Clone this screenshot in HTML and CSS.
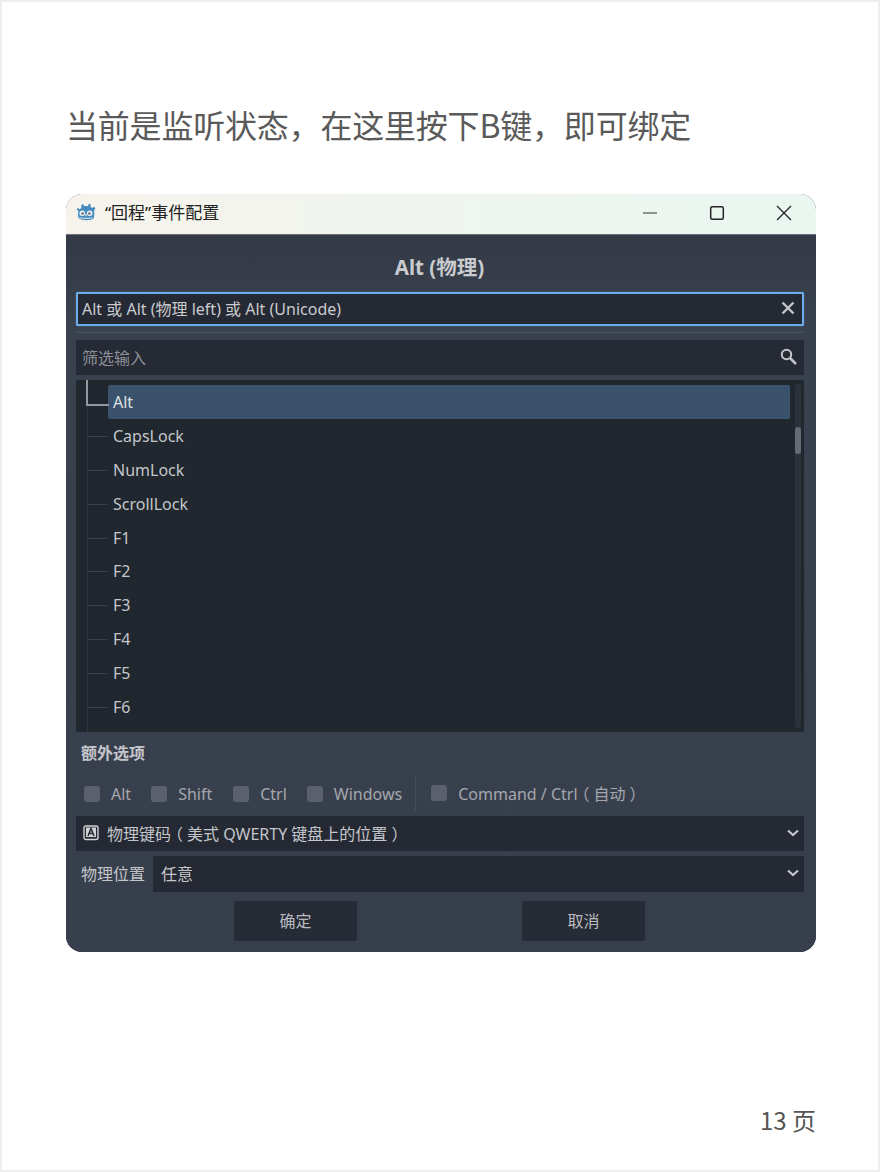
FILE: index.html
```html
<!DOCTYPE html>
<html lang="zh">
<head>
<meta charset="utf-8">
<title>事件配置</title>
<link rel="stylesheet" href="styles.css">
</head>
<body>
<div class="page">
  <h1 class="heading">当前是监听状态，在这里按下B键，即可绑定</h1>
  <div class="dialog">
    <div class="titlebar">
      <svg class="logo" viewBox="0 0 20 20" width="20" height="20">
        <path fill="#478cbf" d="M7.2 .8l.8 2.100h4l.8-2.100 2 .5-.3 2.400 1.800 1.300 1.700-1.300 1.400 1.500-1.200 2.300c.2 2.500.1 5-.2 7.500-2.600 3-12 3-15.600 0-.3-2.500-.4-5-.2-7.500L.500 6.500l1.400-1.500 1.700 1.300 1.800-1.300-.3-2.400z"/>
        <circle cx="6.300" cy="10.300" r="2.800" fill="#e8eef3"/><circle cx="13.700" cy="10.300" r="2.800" fill="#e8eef3"/>
        <circle cx="6.600" cy="10.500" r="1.300" fill="#6b7280"/><circle cx="13.400" cy="10.500" r="1.300" fill="#6b7280"/>
        <rect x="9.400" y="11" width="1.200" height="2" fill="#e8eef3"/>
        <path fill="none" stroke="#e8eef3" stroke-width="1" d="M3.500 14.500c.8.800 1.500.800 2.500.300 1 .9 2.500.9 4 .2 1.500.7 3 .7 4-.200 1 .5 1.700.5 2.500-.300"/>
      </svg>
      <span class="window-title">“回程”事件配置</span>
      <div class="winbtns">
        <svg width="16" height="16" viewBox="0 0 16 16"><path d="M1 8h14" stroke="#333" stroke-width="1.100"/></svg>
        <svg width="16" height="16" viewBox="0 0 16 16"><rect x="1.700" y="1.700" width="12.600" height="12.600" rx="1.500" fill="none" stroke="#222" stroke-width="1.500"/></svg>
        <svg width="16" height="16" viewBox="0 0 16 16"><path d="M1 1l14 14M15 1L1 15" stroke="#222" stroke-width="1.300"/></svg>
      </div>
    </div>
    <div class="body">
      <div class="event-name">Alt (物理)</div>
      <div class="field focused">
        <span class="grow">Alt 或 Alt (物理 left) 或 Alt (Unicode)</span>
        <svg width="14" height="14" viewBox="0 0 14 14"><path d="M1.500 1.500l11 11M12.500 1.500l-11 11" stroke="#c4c6ca" stroke-width="2.400"/></svg>
      </div>
      <div class="rule"></div>
      <div class="field filter">
        <span class="grow muted">筛选输入</span>
        <svg width="17" height="17" viewBox="0 0 17 17"><circle cx="6.500" cy="6.500" r="4.700" fill="none" stroke="#c4c6ca" stroke-width="2"/><path d="M10 10l6 6" stroke="#c4c6ca" stroke-width="2.500"/></svg>
      </div>
      <div class="tree">
        <div class="row selected"><span class="label">Alt</span></div>
        <div class="row"><span class="label">CapsLock</span></div>
        <div class="row"><span class="label">NumLock</span></div>
        <div class="row"><span class="label">ScrollLock</span></div>
        <div class="row"><span class="label">F1</span></div>
        <div class="row"><span class="label">F2</span></div>
        <div class="row"><span class="label">F3</span></div>
        <div class="row"><span class="label">F4</span></div>
        <div class="row"><span class="label">F5</span></div>
        <div class="row"><span class="label">F6</span></div>
        <div class="scrollbar"><div class="thumb"></div></div>
      </div>
      <div class="section">额外选项</div>
      <div class="checks">
        <label class="check c1"><i class="box"></i>Alt</label>
        <label class="check c2"><i class="box"></i>Shift</label>
        <label class="check c3"><i class="box"></i>Ctrl</label>
        <label class="check c4"><i class="box"></i>Windows</label>
        <div class="vsep"></div>
        <label class="check c5"><i class="box"></i><span>Command / Ctrl<span class="paren">（</span>自动<span class="paren">）</span></span></label>
      </div>
      <div class="select first">
        <svg class="keyicon" width="16" height="16" viewBox="0 0 16 16"><rect x="1" y="1" width="14" height="13.500" rx="2" fill="none" stroke="#d0d2d5" stroke-width="1.400"/><rect x="3" y="2.500" width="10" height="9.500" fill="#d0d2d5"/><path d="M5 11l3-7.500L11 11M6.200 8.500h3.600" fill="none" stroke="#252933" stroke-width="1.500"/></svg>
        <span class="grow">物理键码<span class="paren">（</span>美式 QWERTY 键盘上的位置<span class="paren">）</span></span>
        <svg class="chev" width="14" height="10" viewBox="0 0 14 10"><path d="M2 2.500l5 4.500 5-4.500" fill="none" stroke="#c4c6ca" stroke-width="2.200"/></svg>
      </div>
      <div class="location">
        <span class="loc-label">物理位置</span>
        <div class="select second">
          <span class="grow">任意</span>
          <svg class="chev" width="14" height="10" viewBox="0 0 14 10"><path d="M2 2.500l5 4.500 5-4.500" fill="none" stroke="#c4c6ca" stroke-width="2.200"/></svg>
        </div>
      </div>
      <div class="buttons">
        <div class="btn">确定</div>
        <div class="btn">取消</div>
      </div>
    </div>
  </div>
  <div class="pageno">13 页</div>
</div>
</body>
</html>
```
FILE: styles.css
```css
* { box-sizing: border-box; }
html, body { margin: 0; padding: 0; }
body { background: #fff; font-family: "Noto Sans", "Noto Sans CJK SC", sans-serif; }
.page {
  width: 880px; height: 1172px; border: 2px solid #eeeeee; background: #fff;
  padding: 0 64px; display: flex; flex-direction: column;
}
.heading {
  margin: 98px 0 0 0; height: 48px; line-height: 48px;
  font-size: 32px; font-weight: 400; letter-spacing: -0.2px; color: #5a5a5a;
  font-family: "Noto Sans CJK SC", sans-serif; white-space: nowrap;
}
.dialog { margin-top: 46px; width: 750px; height: 758px; border-radius: 16px; overflow: hidden; display: flex; flex-direction: column; background: #383f4c; }
.titlebar {
  height: 41px; flex: none; display: flex; align-items: center; padding: 0 0 2px 10px;
  background: linear-gradient(90deg, #f7f3ec 0%, #f0f4ee 40%, #eaf6f0 100%);
  border-bottom: 1px solid #6a6f78;
}
.logo { flex: none; }
.window-title { margin-left: 9px; font-size: 17px; line-height: 24px; color: #222; font-family: "Noto Sans", "Noto Sans CJK SC", sans-serif; }
.winbtns { margin-left: auto; display: flex; gap: 51px; padding-right: 24px; align-items: center; }
.body { flex: 1; padding: 0 12px 0 10px; display: flex; flex-direction: column; color: #c9cbce; font-size: 16px; background: linear-gradient(180deg, #333a46, #3a414e 12%, #383f4c); }
.grow { flex: 1; white-space: nowrap; }
.muted { color: #8d9096; }
.paren { font-feature-settings: "halt" 1; padding: 0 0.25em; }
.event-name { height: 57px; padding-top: 17px; line-height: 30px; text-align: center; font-weight: 700; font-size: 20.5px; color: #c9cbce; padding-right: 1px; }
.field { display: flex; align-items: center; background: #252933; padding: 0 7px 0 6px; }
.focused { height: 34px; border: 2px solid #6cacea; border-radius: 2px; padding: 0 7px 2px 4px; box-shadow: 0 0 1px #6cacea; }
.rule { height: 1px; margin: 6px 0 7px; background: #4a505c; }
.filter { height: 35px; background: #252a34; padding-bottom: 2px; }
.tree { position: relative; margin-top: 5px; height: 352px; background: #20272f; padding-top: 5px; overflow: hidden; }
.tree::before { content: ""; position: absolute; left: 11px; top: 0; bottom: 0; width: 1px; background: #2c333c; }
.row { position: relative; height: 33.9px; margin-left: 32px; margin-right: 14px; display: flex; align-items: center; padding-left: 5px; color: #c4c6ca; }
.row::before { content: ""; position: absolute; left: -21px; top: 17px; width: 20px; height: 1px; background: #3a414b; }
.row.selected { background: #3a526c; border-radius: 2px; color: #dfe1e4; }
.row.selected::before { left: -22px; top: -5px; height: 24px; width: 21px; background: none; border-left: 2px solid #94989e; border-bottom: 2px solid #94989e; }
.label { white-space: nowrap; }
.scrollbar { position: absolute; left: 719px; top: 4px; bottom: 4px; width: 6px; background: #2b323a; border-radius: 3px; }
.thumb { margin-top: 43px; height: 27px; background: #666c75; border-radius: 3px; }
.section { height: 44px; line-height: 40px; padding-left: 5px; font-weight: 700; font-size: 16px; font-family: "Noto Sans CJK SC", sans-serif; color: #c4c6ca; }
.checks { height: 36px; display: flex; align-items: center; }
.check { display: flex; align-items: center; gap: 11px; color: #a4a7ad; font-size: 16px; white-space: nowrap; }
.box { width: 16px; height: 16px; border-radius: 3px; background: #5a606c; flex: none; }
.c1 { margin-left: 8px; }
.c2 { margin-left: 20px; }
.c3 { margin-left: 21px; }
.c4 { margin-left: 20px; }
.vsep { width: 1px; height: 36px; background: #444b57; margin-left: 13px; }
.c5 { margin-left: 15px; position: relative; top: -1px; }
.select { display: flex; align-items: center; background: #252933; color: #c4c6ca; font-size: 16px; padding: 0 4px 2px 8px; }
.first { height: 35px; margin-top: 4px; gap: 8px; padding-left: 7px; }
.keyicon { flex: none; }
.chev { flex: none; }
.location { display: flex; align-items: center; margin-top: 5px; height: 36px; }
.loc-label { width: 77px; padding: 0 0 2px 5px; white-space: nowrap; color: #c4c6ca; font-size: 16px; }
.second { flex: 1; height: 36px; }
.buttons { display: flex; justify-content: center; gap: 165px; margin-top: 9px; padding-right: 1px; }
.btn { width: 123px; height: 40px; border-radius: 2px; background: #262b35; display: flex; align-items: center; justify-content: center; padding-bottom: 2px; color: #b9bbc0; font-size: 16px; }
.pageno { margin-top: auto; margin-bottom: 35px; margin-right: -2px; text-align: right; font-size: 24px; line-height: 30px; color: #555; font-family: "Noto Sans CJK SC", sans-serif; }
```
